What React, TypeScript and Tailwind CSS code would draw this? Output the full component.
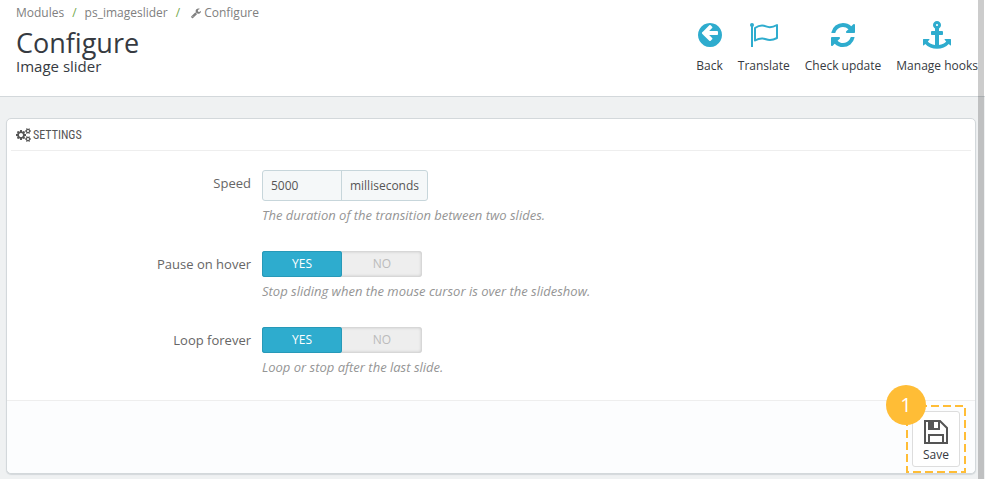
import type { ReactNode } from "react";

interface GlyphProps {
  d: string;
  width: number;
  className: string;
}

// Font glyph outlines: 1792 units per em, y axis pointing up
function Glyph({ d, width, className }: GlyphProps) {
  return (
    <svg viewBox={`0 0 ${width} 1792`} className={className} fill="currentColor" fillRule="evenodd" aria-hidden="true">
      <path transform="translate(0 1536) scale(1 -1)" d={d} />
    </svg>
  );
}

const WRENCH =
  "M384 64q0 26 -19 45t-45 19t-45 -19t-19 -45t19 -45t45 -19t45 19t19 45zM1028 484l-682 -682q-37 -37 -90 -37q-52 0 -91 37l-106 108q-38 36 -38 90q0 53 38 91l681 681q39 -98 114.5 -173.5t173.5 -114.5zM1662 919q0 -39 -23 -106q-47 -134 -164.5 -217.5t-258.5 -83.5q-185 0 -316.5 131.5t-131.5 316.5t131.5 316.5t316.5 131.5q58 0 121.5 -16.5t107.5 -46.5q16 -11 16 -28t-16 -28l-293 -169v-224l193 -107q5 3 79 48.5t135.5 81t70.5 35.5q15 0 23.5 -10t8.5 -25z";

const ARROW_CIRCLE =
  "M1280 832v-128q0 -26 -19 -45t-45 -19h-502l189 -189q19 -19 19 -45t-19 -45l-91 -91q-18 -18 -45 -18t-45 18l-362 362l-91 91q-18 18 -18 45t18 45l91 91l362 362q18 18 45 18t45 -18l91 -91q18 -18 18 -45t-18 -45l-189 -189h502q26 0 45 -19t19 -45zM1536 640q0 -209 -103 -385.5t-279.5 -279.5t-385.5 -103t-385.5 103t-279.5 279.5t-103 385.5t103 385.5t279.5 279.5t385.5 103t385.5 -103t279.5 -279.5t103 -385.5z";

const REFRESH =
  "M1511 480q0 -5 -1 -7q-64 -268 -268 -434.5t-478 -166.5q-146 0 -282.5 55t-243.5 157l-129 -129q-19 -19 -45 -19t-45 19t-19 45v448q0 26 19 45t45 19h448q26 0 45 -19t19 -45t-19 -45l-137 -137q71 -66 161 -102t187 -36q134 0 250 65t186 179q11 17 53 117q8 23 30 23h192q13 0 22.5 -9.5t9.5 -22.5zM1536 1280v-448q0 -26 -19 -45t-45 -19h-448q-26 0 -45 19t-19 45t19 45l138 138q-148 137 -349 137q-134 0 -250 -65t-186 -179q-11 -17 -53 -117q-8 -23 -30 -23h-199q-13 0 -22.5 9.5t-9.5 22.5v7q65 268 270 434.5t480 166.5q146 0 284 -55.5t245 -156.5l130 129q19 19 45 19t45 -19t19 -45z";

const ANCHOR =
  "M960 1280q0 26 -19 45t-45 19t-45 -19t-19 -45t19 -45t45 -19t45 19t19 45zM1792 352v-352q0 -22 -20 -30q-8 -2 -12 -2q-13 0 -23 9l-93 93q-119 -143 -318.5 -226.5t-429.5 -83.5t-429.5 83.5t-318.5 226.5l-93 -93q-9 -9 -23 -9q-4 0 -12 2q-20 8 -20 30v352q0 14 9 23t23 9h352q22 0 30 -20q8 -19 -7 -35l-100 -100q67 -91 189.5 -153.5t271.5 -82.5v647h-192q-26 0 -45 19t-19 45v128q0 26 19 45t45 19h192v163q-58 34 -93 92.5t-35 128.5q0 106 75 181t181 75t181 -75t75 -181q0 -70 -35 -128.5t-93 -92.5v-163h192q26 0 45 -19t19 -45v-128q0 -26 -19 -45t-45 -19h-192v-647q149 20 271.5 82.5t189.5 153.5l-100 100q-15 16 -7 35q8 20 30 20h352q14 0 23 -9t9 -23z";

const BIG_COG =
  "M896 640q0 106 -75 181t-181 75t-181 -75t-75 -181t75 -181t181 -75t181 75t75 181zM1280 731v-185q0 -10 -7 -19.5t-16 -10.5l-155 -24q-11 -35 -32 -76q34 -48 90 -115q7 -11 7 -20q0 -12 -7 -19q-23 -30 -82.5 -89.5t-78.5 -59.5q-11 0 -21 7l-115 90q-37 -19 -77 -31q-11 -108 -23 -155q-7 -24 -30 -24h-186q-11 0 -20 7.5t-10 17.5l-23 153q-34 10 -75 31l-118 -89q-7 -7 -20 -7q-11 0 -21 8q-144 133 -144 160q0 9 7 19q10 14 41 53t47 61q-23 44 -35 82l-152 24q-10 1 -17 9.5t-7 19.5v185q0 10 7 19.5t16 10.5l155 24q11 35 32 76q-34 48 -90 115q-7 11 -7 20q0 12 7 20q22 30 82 89t79 59q11 0 21 -7l115 -90q34 18 77 32q11 108 23 154q7 24 30 24h186q11 0 20 -7.5t10 -17.5l23 -153q34 -10 75 -31l118 89q8 7 20 7q11 0 21 -8q144 -133 144 -160q0 -8 -7 -19q-12 -16 -42 -54t-45 -60q23 -48 34 -82l152 -23q10 -2 17 -10.5t7 -19.5z";

const SMALL_COG =
  "M1664 128q0 52 -38 90t-90 38t-90 -38t-38 -90q0 -53 37.5 -90.5t90.5 -37.5t90.5 37.5t37.5 90.5zM1920 198v-140q0 -16 -149 -31q-12 -27 -30 -52q51 -113 51 -138q0 -4 -4 -7q-122 -71 -124 -71q-8 0 -46 47t-52 68q-20 -2 -30 -2t-30 2q-14 -21 -52 -68t-46 -47q-2 0 -124 71q-4 3 -4 7q0 25 51 138q-18 25 -30 52q-149 15 -149 31v140q0 16 149 31q13 29 30 52q-51 113 -51 138q0 4 4 7q4 2 35 20t59 34t30 16q8 0 46 -46.5t52 -67.5q20 2 30 2t30 -2q51 71 92 112l6 2q4 0 124 -70q4 -3 4 -7q0 -25 -51 -138q17 -23 30 -52q149 -15 149 -31z";

function CogsIcon() {
  return (
    <svg viewBox="0 0 1920 1792" className="h-[14px] w-[15px]" fill="currentColor" aria-hidden="true">
      <g transform="translate(0 1536) scale(1 -1)" fillRule="evenodd">
        <path d={BIG_COG} />
        <path d={SMALL_COG} />
        <path transform="translate(0 1024)" d={SMALL_COG} />
      </g>
    </svg>
  );
}

function FlagIcon() {
  return (
    <svg viewBox="0 0 30 30" className="size-[30px]" fill="none" stroke="currentColor" aria-hidden="true">
      <circle cx="3" cy="5" r="2" fill="currentColor" stroke="none" />
      <path d="M3 5v22" strokeWidth="2" />
      <path d="M6 8C10.500 5 14 5.200 17 6.400s6 1.400 11-1.400v13c-5 2.600-8 2.400-11 1.200s-6.500-1.400-11 1.300z" strokeWidth="2" strokeLinejoin="round" />
    </svg>
  );
}

function SaveIcon() {
  return (
    <svg viewBox="0 0 24 24" className="size-6" fill="none" stroke="currentColor" strokeWidth="2" aria-hidden="true">
      <path d="M1 1h15l7 7v15H1z" />
      <path d="M5 23v-8h14v8" />
      <path d="M4 0h12v10H4zM10 2h4v6h-4z" fill="currentColor" fillRule="evenodd" stroke="none" />
    </svg>
  );
}

interface ToolbarItem {
  label: string;
  icon: ReactNode;
}

const TOOLBAR: ToolbarItem[] = [
  { label: "Back", icon: <Glyph d={ARROW_CIRCLE} width={1536} className="h-[28px] w-6" /> },
  { label: "Translate", icon: <FlagIcon /> },
  { label: "Check update", icon: <Glyph d={REFRESH} width={1536} className="h-[28px] w-6" /> },
  { label: "Manage hooks", icon: <Glyph d={ANCHOR} width={1792} className="size-[28px]" /> },
];

interface RowProps {
  label: string;
  htmlFor?: string;
  id?: string;
  help: string;
  children: ReactNode;
}

function FormRow({ label, htmlFor, id, help, children }: RowProps) {
  return (
    <div className="flex gap-[11px]">
      <div className="w-1/4 pt-1 text-right text-[13px] leading-[18px] text-[#666]">
        {htmlFor ? <label htmlFor={htmlFor}>{label}</label> : <span id={id}>{label}</span>}
      </div>
      <div className="flex-1">
        {children}
        <p className="mt-1 text-[13px] leading-5 text-[#959595] italic">{help}</p>
      </div>
    </div>
  );
}

function YesNoSwitch({ name, labelledBy }: { name: string; labelledBy: string }) {
  return (
    <div
      role="radiogroup"
      aria-labelledby={labelledBy}
      className="flex h-[26px] w-40 rounded-[3px] bg-[#eee] text-[12px] leading-[26px] text-[#bbb] shadow-[inset_0_0_3px_1px_rgba(0,0,0,0.15)]"
    >
      {["YES", "NO"].map((option) => (
        <label
          key={option}
          className="flex-1 cursor-pointer rounded-[3px] text-center has-checked:bg-[#2eacce] has-checked:text-white has-checked:shadow-[inset_0_0_0_1px_#2799b8]"
        >
          <input type="radio" name={name} value={option} defaultChecked={option === "YES"} className="sr-only" />
          {option}
        </label>
      ))}
    </div>
  );
}

export default function App() {
  return (
    <div className="relative min-h-screen overflow-hidden bg-[#eff1f2] pb-[5px] font-['Open_Sans',sans-serif] text-[#363a41]">
      <header className="flex justify-between border-b border-[#d3d8db] bg-white pr-[7px] pb-[22px] pl-4">
        <div>
          <nav aria-label="Breadcrumb" className="flex gap-2 pt-1 text-[12px] leading-[18px] text-[#808080]">
            <a href="#modules">Modules</a>
            <span className="text-[#72a84c]">/</span>
            <a href="#module">ps_imageslider</a>
            <span className="text-[#72a84c]">/</span>
            <a href="#configure" className="flex items-center gap-[3px] pl-[3px]">
              <Glyph d={WRENCH} width={1664} className="h-3 w-[10px]" />
              Configure
            </a>
          </nav>
          <h1 className="mt-[5px] text-[27px] leading-[31px]">Configure</h1>
          <h2 className="text-[15px] leading-4">Image slider</h2>
        </div>
        <div className="flex gap-[15px] pt-5 text-[12px] leading-4">
          {TOOLBAR.map((item) => (
            <button key={item.label} type="button" className="flex cursor-pointer flex-col items-center gap-2 self-start">
              <span className="flex h-[30px] items-center text-[#2eacce]">{item.icon}</span>
              {item.label}
            </button>
          ))}
        </div>
      </header>

      <main className="pt-[21px] pr-[9px] pl-[6px]">
        <form className="rounded-[5px] border border-[#d3d8db] bg-white shadow-[0_1px_1px_#d3d8db]">
          <h3 className="mx-1 flex h-8 items-center gap-[2px] border-b border-[#eee] pl-[5px] font-['Ubuntu_Condensed','Roboto_Condensed','Open_Sans_Condensed',Lato,sans-serif] text-[12px] text-[#555]">
            <CogsIcon />
            SETTINGS
          </h3>

          <div className="flex flex-col gap-[26px] px-1 pt-[19px] pb-[23px]">
            <FormRow label="Speed" htmlFor="speed" help="The duration of the transition between two slides.">
              <div className="flex h-[31px] w-[166px] rounded-[3px] border border-[#c7d6db] bg-[#f5f8f9] text-[12px] text-[#555]">
                <input id="speed" type="text" defaultValue="5000" className="w-[78px] px-2 outline-none" />
                <span className="flex flex-1 items-center justify-center border-l border-[#c7d6db]">milliseconds</span>
              </div>
            </FormRow>
            <FormRow label="Pause on hover" id="pause-label" help="Stop sliding when the mouse cursor is over the slideshow.">
              <YesNoSwitch name="pause" labelledBy="pause-label" />
            </FormRow>
            <FormRow label="Loop forever" id="loop-label" help="Loop or stop after the last slide.">
              <YesNoSwitch name="loop" labelledBy="loop-label" />
            </FormRow>
          </div>

          <div className="flex justify-end rounded-b-[5px] border-t border-[#eee] bg-[#fcfdfe] px-[15px] pt-[10px] pb-[6px]">
            <div className="relative">
              <button
                type="button"
                className="flex h-14 w-12 cursor-pointer flex-col items-center justify-end gap-[3px] rounded-[3px] border border-[#ddd] bg-white pb-[3px] text-[12px] leading-4"
              >
                <span className="text-[#555]">
                  <SaveIcon />
                </span>
                Save
              </button>
              <svg className="pointer-events-none absolute -inset-[6px] h-[68px] w-[60px]" fill="none" aria-hidden="true">
                <rect x="1" y="1" width="58" height="66" stroke="#ffbd36" strokeWidth="2" strokeDasharray="8 4" />
              </svg>
              <span className="absolute -top-[26px] -left-[26px] flex size-10 items-center justify-center rounded-full bg-[#ffbd36] text-[20px] text-white">
                1
              </span>
            </div>
          </div>
        </form>
      </main>

      <div className="absolute inset-y-0 right-px w-[6px] bg-black/20" />
    </div>
  );
}
